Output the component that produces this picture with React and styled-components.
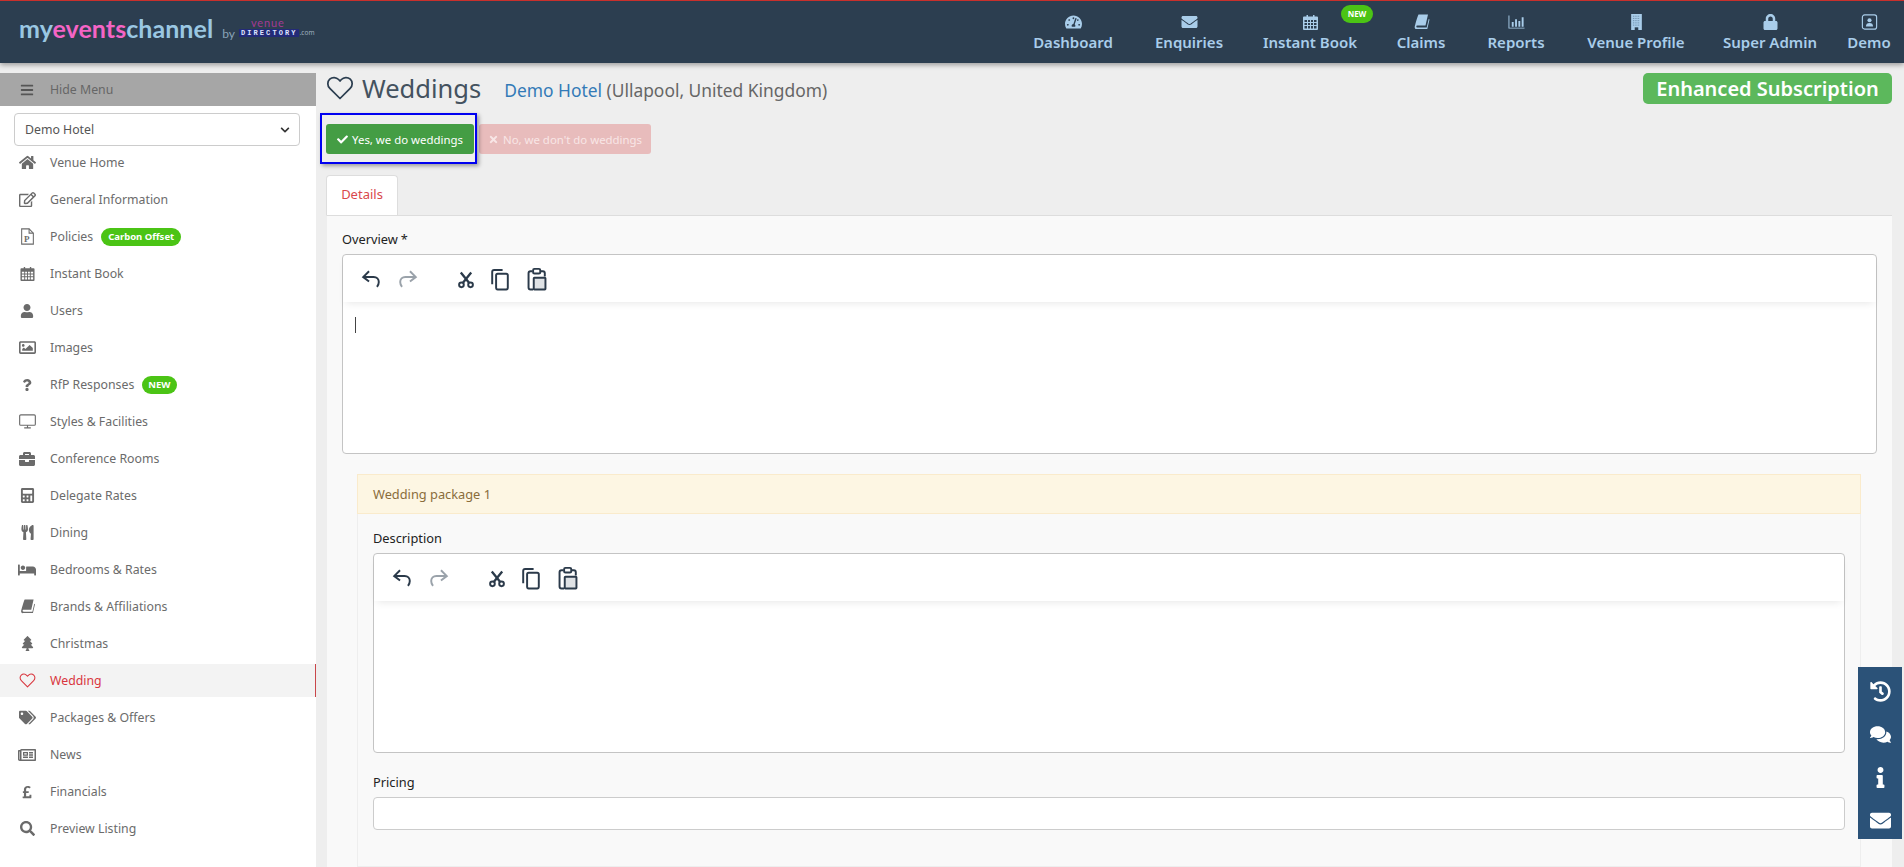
import React from "react";
import styled, { createGlobalStyle } from "styled-components";
import {
  FaTachometerAlt,
  FaEnvelope,
  FaLock,
  FaHome,
  FaRegEdit,
  FaUser,
  FaRegImage,
  FaQuestion,
  FaBriefcase,
  FaCalculator,
  FaUtensils,
  FaBed,
  FaTree,
  FaTags,
  FaRegNewspaper,
  FaPoundSign,
  FaSearch,
  FaCheck,
  FaTimes,
  FaHistory,
  FaComments,
  FaInfo,
  FaBars,
  FaChevronDown,
} from "react-icons/fa";

const FONT = '"Noto Sans", "Liberation Sans", sans-serif';

const GlobalStyle = createGlobalStyle`
  html, body {
    margin: 0;
    padding: 0;
    height: 100%;
    overflow: hidden;
    background: #eeeeee;
    font-family: ${FONT};
  }
  * { box-sizing: border-box; }
`;

const Page = styled.div`
  height: 100vh;
  display: flex;
  flex-direction: column;
  overflow: hidden;
`;

const Header = styled.header`
  flex: 0 0 63px;
  display: flex;
  justify-content: space-between;
  background: #2c3e50;
  border-top: 1px solid #c9302c;
  box-shadow: 0 2px 5px rgba(0, 0, 0, 0.35);
  position: relative;
  z-index: 2;
`;

const Logo = styled.div`
  display: flex;
  align-items: flex-start;
  padding: 12px 0 0 19px;
`;
const LogoWord = styled.span`
  font-family: Lato, sans-serif;
  font-size: 25px;
  font-weight: 700;
  line-height: 30px;
  letter-spacing: 0.05px;
  color: #9ac7e2;
`;
const LogoPink = styled.span`
  color: #f564c5;
`;
const LogoBy = styled.span`
  font-family: Lato, sans-serif;
  font-size: 12px;
  color: #8aa3b8;
  margin: 13px 4px 0 9px;
`;
const LogoStack = styled.div`
  display: flex;
  flex-direction: column;
  margin-top: 5px;
`;
const LogoVenue = styled.span`
  font-family: Lato, sans-serif;
  font-size: 11px;
  line-height: 10px;
  letter-spacing: 0.9px;
  color: #a43a94;
  margin-left: 12px;
`;
const LogoDirectory = styled.div`
  display: flex;
  align-items: flex-end;
  margin-top: 1px;
`;
const LogoBox = styled.span`
  font-family: "Liberation Mono", monospace;
  font-size: 7px;
  font-weight: 700;
  line-height: 8px;
  letter-spacing: 2.1px;
  color: #dfe4ff;
  background: #232a78;
  padding: 0 1px 0 2px;
`;
const LogoCom = styled.span`
  font-size: 6.5px;
  line-height: 8px;
  color: #9fb0bf;
  margin-left: 1px;
`;

const Nav = styled.nav`
  display: flex;
`;
const NavItem = styled.a`
  position: relative;
  width: ${(p) => p.$slot}px;
  display: flex;
  flex-direction: column;
  align-items: center;
  padding-top: 13px;
  color: #a9cdea;
  font-size: 15px;
  font-weight: 600;
  line-height: 20px;
  white-space: nowrap;
  svg {
    height: 16px;
    width: 17px;
    margin-bottom: 2px;
  }
`;
const NewDot = styled.span`
  position: absolute;
  top: 4px;
  left: 97px;
  width: 32px;
  height: 18px;
  border-radius: 9px;
  background: #4bc415;
  color: #fff;
  font-size: 8px;
  font-weight: 700;
  line-height: 18px;
  text-align: center;
`;

const Body = styled.div`
  flex: 1;
  display: flex;
  min-height: 0;
`;

const Sidebar = styled.aside`
  flex: 0 0 316px;
  background: #fff;
  padding-top: 10px;
  position: relative;
  &::before {
    content: "";
    position: absolute;
    left: 0;
    right: 0;
    top: 0;
    height: 10px;
    background: #eeeeee;
  }
`;
const HideBar = styled.div`
  height: 33px;
  background: #a6a6a6;
  display: flex;
  align-items: center;
  color: #666;
  font-size: 12.3px;
  svg {
    width: 14px;
    height: 14px;
    margin: 0 16px 0 20px;
    color: #555;
  }
`;
const HotelSelect = styled.div`
  height: 33px;
  margin: 7px 16px 0 14px;
  border: 1px solid #ccc;
  border-radius: 4px;
  display: flex;
  align-items: center;
  justify-content: space-between;
  padding: 0 9px 0 10px;
  font-size: 12.3px;
  color: #555;
  svg {
    width: 10px;
    height: 10px;
    color: #333;
  }
`;
const Menu = styled.ul`
  list-style: none;
  margin: 0;
  padding: 0;
`;
const MenuRow = styled.li`
  height: 33px;
  margin-bottom: 4px;
  display: flex;
  align-items: center;
  font-size: 12.3px;
  color: ${(p) => (p.$active ? "#d9363e" : "#6b6b6b")};
  background: ${(p) => (p.$active ? "#f3f3f3" : "transparent")};
  border-right: 1px solid ${(p) => (p.$active ? "#c9464a" : "transparent")};
`;
const MenuIcon = styled.span`
  flex: 0 0 50px;
  display: flex;
  justify-content: center;
  padding-left: 4px;
  svg {
    width: ${(p) => p.$size || 17}px;
    height: ${(p) => p.$size || 17}px;
  }
`;
const Pill = styled.span`
  margin-left: 8px;
  height: 18px;
  padding: 0 ${(p) => (p.$tight ? 6 : 7)}px;
  border-radius: 9px;
  background: #4bc415;
  color: #fff;
  font-size: 9.5px;
  font-weight: 700;
  line-height: 18px;
`;

const Main = styled.main`
  flex: 1;
  min-width: 0;
  padding: 10px 12px 0 10px;
`;
const TitleRow = styled.div`
  height: 50px;
  display: flex;
  align-items: flex-start;
  justify-content: space-between;
`;
const Title = styled.div`
  display: flex;
  align-items: center;
  height: 29px;
  color: #4a5a68;
  svg {
    width: 28px;
    height: 28px;
    color: #2c3e50;
    margin-right: 8px;
  }
`;
const TitleText = styled.h1`
  margin: 0;
  font-size: 25.5px;
  font-weight: 400;
  color: #44525f;
`;
const SubTitle = styled.span`
  margin: 5px 0 0 23px;
  font-size: 17.4px;
  color: #666;
`;
const HotelLink = styled.a`
  color: #337ab7;
`;
const PlanBadge = styled.div`
  width: 249px;
  height: 31px;
  border-radius: 5px;
  background: #5cb85c;
  color: #fff;
  font-size: 20px;
  font-weight: 600;
  line-height: 31px;
  text-align: center;
`;
const ChoiceRow = styled.div`
  position: relative;
  display: flex;
  gap: 5px;
  margin-top: 1px;
`;
const Choice = styled.button`
  height: 30px;
  width: ${(p) => p.$width}px;
  border: 0;
  border-radius: 3px;
  padding: 0;
  display: flex;
  align-items: center;
  justify-content: center;
  gap: 4px;
  font-family: ${FONT};
  font-size: 11.4px;
  color: ${(p) => (p.$on ? "#fff" : "#f8e6e6")};
  background: ${(p) => (p.$on ? "#449d44" : "#e8bcbc")};
  svg {
    width: 11px;
    height: 11px;
  }
`;
const Highlight = styled.span`
  position: absolute;
  left: -6px;
  top: -11px;
  width: 157px;
  height: 51px;
  border: 2px solid #0000f0;
  box-shadow: 2px 2px 4px rgba(0, 0, 0, 0.35);
  pointer-events: none;
`;
const Tabs = styled.div`
  display: flex;
  margin-top: 21px;
`;
const Tab = styled.div`
  width: 72px;
  height: 40px;
  background: #fff;
  border: 1px solid #ddd;
  border-bottom: 0;
  border-radius: 4px 4px 0 0;
  color: #d9484c;
  font-size: 13px;
  line-height: 37px;
  text-align: center;
`;
const TabBody = styled.section`
  background: #f9f9f9;
  border-top: 1px solid #ddd;
  border-left: 1px solid #eee;
  padding: 14px 15px 0;
  height: 700px;
`;
const FieldLabel = styled.label`
  display: block;
  height: 24px;
  font-size: 12.8px;
  line-height: 18px;
  color: #222;
`;
const Star = styled.span`
  margin-left: 3px;
`;
const EditorBox = styled.div`
  height: ${(p) => p.$height}px;
  background: #fff;
  border: 1px solid #c4c4c4;
  border-radius: 4px;
  position: relative;
`;
const EditorBar = styled.div`
  height: 47px;
  display: flex;
  align-items: center;
  padding-left: 15px;
  gap: 11px;
  box-shadow: 0 4px 8px -3px rgba(0, 0, 0, 0.1);
  color: #2b3a4a;
  svg {
    width: 26px;
    height: 26px;
    display: block;
  }
`;
const BarSpacer = styled.span`
  width: 10px;
`;
const CutSlot = styled.span`
  margin-right: -3px;
`;
const Caret = styled.span`
  position: absolute;
  left: 12px;
  top: 62px;
  width: 1px;
  height: 16px;
  background: #444;
`;
const PackagePanel = styled.div`
  margin: 20px 16px 0 15px;
  border: 1px solid #eeeeee;
  padding-bottom: 36px;
`;
const PackageHead = styled.div`
  height: 40px;
  background: #fdf6e3;
  border: 1px solid #faebcc;
  margin: -1px -1px 0;
  padding-left: 15px;
  color: #8a6d3b;
  font-size: 12.8px;
  line-height: 38px;
`;
const PackageBody = styled.div`
  padding: 15px 15px 0;
`;
const PricingLabel = styled(FieldLabel)`
  margin-top: 20px;
`;
const PriceInput = styled.div`
  height: 33px;
  background: #fff;
  border: 1px solid #ccc;
  border-radius: 4px;
`;
const SideDock = styled.div`
  position: fixed;
  right: 2px;
  top: 667px;
  width: 44px;
  height: 172px;
  background: #2b5278;
  display: flex;
  flex-direction: column;
  align-items: center;
  gap: 22px;
  padding-top: 14px;
  color: #fff;
  z-index: 3;
  svg {
    width: 21px;
    height: 21px;
  }
`;

const HeartIcon = () => (
  <svg viewBox="0 0 24 24" fill="none" stroke="currentColor" strokeWidth="1.5" strokeLinejoin="round">
    <path d="M12 21 3.300 12.300C1 10 1 6.500 3.200 4.400 5.400 2.400 8.800 2.600 10.800 4.700L12 6l1.200-1.300c2-2.100 5.400-2.300 7.600-.3 2.200 2.100 2.200 5.600-.1 7.900z" />
  </svg>
);
const PolicyIcon = () => (
  <svg viewBox="0 0 16 16" fill="none" stroke="currentColor" strokeWidth="1">
    <path d="M2.500.8h7l4 4v10.400h-11z" />
    <path d="M9.500.8v4h4" />
    <text x="4.800" y="12.800" fontSize="8.500" fontWeight="700" fill="currentColor" stroke="none" fontFamily="Liberation Serif">
      P
    </text>
  </svg>
);
const MonitorIcon = () => (
  <svg viewBox="0 0 18 16" fill="none" stroke="currentColor" strokeWidth="1.2">
    <rect x="0.700" y="1" width="16.600" height="11" rx="1.200" />
    <path d="M9 12v2.500M5.500 14.800h7" />
  </svg>
);
const CalendarIcon = () => (
  <svg viewBox="0 0 16 16" fill="currentColor">
    <path
      fillRule="evenodd"
      d="M1.500 2.500H4V1h1.500v1.500h5V1H12v1.500h2.500a1 1 0 0 1 1 1V15a1 1 0 0 1-1 1h-13a1 1 0 0 1-1-1V3.500a1 1 0 0 1 1-1zM2 6v2h2.500V6zm3.500 0v2h2V6zm3 0v2h2V6zm3 0v2H14V6zM2 9v2h2.500V9zm3.500 0v2h2V9zm3 0v2h2V9zm3 0v2H14V9zM2 12v2.500h2.500V12zm3.500 0v2.500h2V12zm3 0v2.500h2V12zm3 0v2.500H14V12z"
    />
  </svg>
);
const BookIcon = () => (
  <svg viewBox="0 0 16 16" fill="currentColor">
    <path d="M5 .5h9.500L12 11.500H4c-.8 0-1.200.5-1.200 1s.4 1 1.200 1h9.200l2-8.500.8.500-2.200 9.500H3.600C2 15.500 1 14.300 1.200 12.800 1.400 11.800 4 2 5 .5z" />
  </svg>
);
const ReportsIcon = () => (
  <svg viewBox="0 0 18 16" fill="currentColor">
    <path d="M0.500 1h1v13h16v1h-17z" />
    <path d="M4 8h2v5H4zM7.500 5h2v8h-2zM11 7h2v6h-2zM14.500 3h2v10h-2z" />
  </svg>
);
const BuildingIcon = () => (
  <svg viewBox="0 0 12 18">
    <rect x="0" y="0" width="12" height="18" fill="currentColor" />
    <path
      d="M2 2.500h8M2 5h8M2 7.500h8M2 10h8M2 12.500h8"
      stroke="#5c7c98"
      strokeWidth="1"
      strokeDasharray="1 1"
    />
    <rect x="4" y="15" width="4" height="3" fill="#2c3e50" />
  </svg>
);
const UserBoxIcon = () => (
  <svg viewBox="0 0 18 18" fill="none" stroke="currentColor" strokeWidth="1.300">
    <rect x="1" y="1" width="16" height="16" rx="2.500" />
    <circle cx="9" cy="7" r="2.300" fill="currentColor" stroke="none" />
    <path d="M5 14c0-3 1.500-4 4-4s4 1 4 4z" fill="currentColor" stroke="none" />
  </svg>
);
const UndoIcon = () => (
  <svg viewBox="0 0 20 20" fill="none" stroke="currentColor" strokeWidth="1.500">
    <path d="M8.500 4 4 8.500 8.500 12" />
    <path d="M4 8.500h8c2.500 0 4 1.700 4 3.800 0 1.400-.5 2.600-1.400 3.700" />
  </svg>
);
const RedoIcon = () => (
  <svg viewBox="0 0 20 20" fill="none" stroke="#9aa2aa" strokeWidth="1.500">
    <path d="M11.500 4 16 8.500 11.500 12" />
    <path d="M16 8.500H8c-2.500 0-4 1.700-4 3.800 0 1.400.5 2.600 1.400 3.700" />
  </svg>
);
const CutIcon = () => (
  <svg viewBox="0 0 20 20" fill="none" stroke="currentColor" strokeWidth="1.500">
    <circle cx="6.500" cy="14.500" r="1.800" />
    <circle cx="13.500" cy="14.500" r="1.800" />
    <path d="M7.500 13 14 5M12.500 13 6 5" strokeWidth="1.800" />
  </svg>
);
const CopyIcon = () => (
  <svg viewBox="0 0 20 20" fill="none" stroke="currentColor" strokeWidth="1.500">
    <path d="M4 14V4.500C4 3.700 4.500 3 5.500 3H12" />
    <rect x="7" y="6" width="9" height="12" rx="1.200" />
  </svg>
);
const PasteIcon = () => (
  <svg viewBox="0 0 20 20" fill="none" stroke="currentColor" strokeWidth="1.500">
    <path d="M7 18H5c-.8 0-1.500-.7-1.500-1.500V5.500C3.500 4.700 4.200 4 5 4h1.500M13 4h1.500c.8 0 1.500.7 1.500 1.500V8" />
    <rect x="7" y="2.200" width="5.500" height="3.600" rx="1" />
    <rect x="7.500" y="9" width="9" height="9" rx="0.500" fill="#dfe2e5" />
  </svg>
);

const EditorTools = () => (
  <EditorBar>
    <UndoIcon />
    <RedoIcon />
    <BarSpacer />
    <CutSlot>
      <CutIcon />
    </CutSlot>
    <CopyIcon />
    <PasteIcon />
  </EditorBar>
);

const navItems = [
  { label: "Dashboard", icon: <FaTachometerAlt />, slot: 122 },
  { label: "Enquiries", icon: <FaEnvelope />, slot: 110 },
  { label: "Instant Book", icon: <CalendarIcon />, slot: 132, isNew: true },
  { label: "Claims", icon: <BookIcon />, slot: 90 },
  { label: "Reports", icon: <ReportsIcon />, slot: 100 },
  { label: "Venue Profile", icon: <BuildingIcon />, slot: 140 },
  { label: "Super Admin", icon: <FaLock />, slot: 128 },
  { label: "Demo", icon: <UserBoxIcon />, slot: 70 },
];

const menuItems = [
  { label: "Venue Home", icon: <FaHome /> },
  { label: "General Information", icon: <FaRegEdit /> },
  { label: "Policies", icon: <PolicyIcon />, pill: "Carbon Offset" },
  { label: "Instant Book", icon: <CalendarIcon />, size: 15 },
  { label: "Users", icon: <FaUser />, size: 14 },
  { label: "Images", icon: <FaRegImage /> },
  { label: "RfP Responses", icon: <FaQuestion />, pill: "NEW", tight: true, size: 12 },
  { label: "Styles & Facilities", icon: <MonitorIcon /> },
  { label: "Conference Rooms", icon: <FaBriefcase />, size: 16 },
  { label: "Delegate Rates", icon: <FaCalculator />, size: 15 },
  { label: "Dining", icon: <FaUtensils />, size: 15 },
  { label: "Bedrooms & Rates", icon: <FaBed />, size: 18 },
  { label: "Brands & Affiliations", icon: <BookIcon />, size: 15 },
  { label: "Christmas", icon: <FaTree />, size: 15 },
  { label: "Wedding", icon: <HeartIcon />, active: true },
  { label: "Packages & Offers", icon: <FaTags /> },
  { label: "News", icon: <FaRegNewspaper />, size: 18 },
  { label: "Financials", icon: <FaPoundSign />, size: 14 },
  { label: "Preview Listing", icon: <FaSearch />, size: 15 },
];

export default function App() {
  return (
    <Page>
      <GlobalStyle />
      <Header>
        <Logo>
          <LogoWord>
            my<LogoPink>events</LogoPink>channel
          </LogoWord>
          <LogoBy>by</LogoBy>
          <LogoStack>
            <LogoVenue>venue</LogoVenue>
            <LogoDirectory>
              <LogoBox>DIRECTORY</LogoBox>
              <LogoCom>.com</LogoCom>
            </LogoDirectory>
          </LogoStack>
        </Logo>
        <Nav>
          {navItems.map((item) => (
            <NavItem key={item.label} $slot={item.slot}>
              {item.icon}
              {item.label}
              {item.isNew && <NewDot>NEW</NewDot>}
            </NavItem>
          ))}
        </Nav>
      </Header>
      <Body>
        <Sidebar>
          <HideBar>
            <FaBars />
            Hide Menu
          </HideBar>
          <HotelSelect>
            Demo Hotel
            <FaChevronDown />
          </HotelSelect>
          <Menu>
            {menuItems.map((item) => (
              <MenuRow key={item.label} $active={item.active}>
                <MenuIcon $size={item.size}>{item.icon}</MenuIcon>
                {item.label}
                {item.pill && <Pill $tight={item.tight}>{item.pill}</Pill>}
              </MenuRow>
            ))}
          </Menu>
        </Sidebar>
        <Main>
          <TitleRow>
            <Title>
              <HeartIcon />
              <TitleText>Weddings</TitleText>
              <SubTitle>
                <HotelLink>Demo Hotel</HotelLink> (Ullapool, United Kingdom)
              </SubTitle>
            </Title>
            <PlanBadge>Enhanced Subscription</PlanBadge>
          </TitleRow>
          <ChoiceRow>
            <Choice $on $width={148}>
              <FaCheck />
              Yes, we do weddings
            </Choice>
            <Choice $width={172}>
              <FaTimes />
              No, we don't do weddings
            </Choice>
            <Highlight />
          </ChoiceRow>
          <Tabs>
            <Tab>Details</Tab>
          </Tabs>
          <TabBody>
            <FieldLabel>
              Overview<Star>*</Star>
            </FieldLabel>
            <EditorBox $height={200}>
              <EditorTools />
              <Caret />
            </EditorBox>
            <PackagePanel>
              <PackageHead>Wedding package 1</PackageHead>
              <PackageBody>
                <FieldLabel>Description</FieldLabel>
                <EditorBox $height={200}>
                  <EditorTools />
                </EditorBox>
                <PricingLabel>Pricing</PricingLabel>
                <PriceInput />
              </PackageBody>
            </PackagePanel>
          </TabBody>
        </Main>
      </Body>
      <SideDock>
        <FaHistory />
        <FaComments />
        <FaInfo />
        <FaEnvelope />
      </SideDock>
    </Page>
  );
}
